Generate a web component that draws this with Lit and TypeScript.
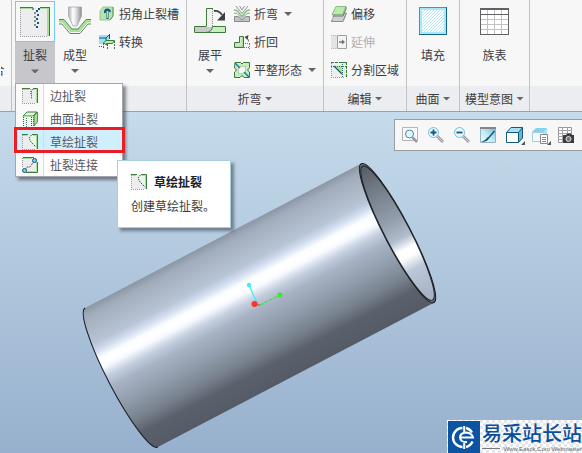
import { LitElement, html, css, svg, nothing, type TemplateResult } from "lit";
import { customElement, property } from "lit/decorators.js";

type Glyph = { w: number; h: number; art: TemplateResult };

const GREEN = "#3c7a3c";
const LIME = "#a4e096";
const BLUE = "#14597d";

const dottedCorner = (n: number) => svg`
  <path d="M.5 1V${n}M0 ${n - 0.5}H${n - 2}" stroke="#9a9aa0" stroke-dasharray="1 1" fill="none"/>`;

const glyphs: Record<string, Glyph> = {
  rip: { w: 30, h: 30, art: svg`
    <g shape-rendering="crispEdges">
      <path d="M0 1H30V29H0z" fill="#ededf0"/>
      <path d="M0 1H13V2H0zM20 1H27V2H20z" fill="${LIME}"/>
      <path d="M27 1H29V29H27z" fill="${LIME}"/>
      <path d="M0 0H13V1H0zM20 0H30V29H29V1H20z" fill="${GREEN}"/>
      ${dottedCorner(30)}
      <path d="M12 1h2v2h-2zM14 5h2v2h-2zM14 9h2v2h-2zM14 13h2v2h-2zM14 17h2v2h-2z" fill="#7d9687"/>
      <path d="M18 1h2v2h-2zM16 3h2v2h-2zM17 7h2v2h-2zM16 11h2v2h-2zM17 15h2v2h-2zM16 19h2v2h-2z" fill="${BLUE}"/>
    </g>` },
  form: { w: 32, h: 28, art: svg`
    <defs><linearGradient id="punch"><stop offset="0" stop-color="#b0b0b5"/><stop offset=".35" stop-color="#fff"/><stop offset=".6" stop-color="#dcdce0"/><stop offset="1" stop-color="#8c8c92"/></linearGradient></defs>
    <path d="M9.500 0V9L14 19H18L22.500 9V0z" fill="url(#punch)" stroke="#a2a2a7" stroke-width=".7"/>
    <path d="M0 14H4L12 23.500H20L28 14H32" fill="none" stroke="${LIME}" stroke-width="3"/>
    <path d="M0 12.500H5L13 22H19L27 12.500H32" fill="none" stroke="#5b8b55" stroke-width="1"/>
    <path d="M0 17H3L11 26.500H21L29 17H32" fill="none" stroke="#77777c" stroke-width="1"/>` },
  flat: { w: 32, h: 26, art: svg`
    <path d="M0 18.500H12V.5H19V18.500H31.500V24.500H.5V18.500" fill="#f1f1f1"/>
    <path d="M1 19H18Q17 24 12 24H1z" fill="#c9c9cd"/>
    <path d="M18 19H31V24H13Q18 23 18 19" fill="#c8edbf"/>
    <path d="M12.500 18V.5H19" fill="none" stroke="${GREEN}"/>
    <path d="M18.500 1V18" stroke="#7c9a7a" stroke-dasharray="1 1"/>
    <path d="M12.500 18.500H.5V24.500H31.500V18.500H18.500Q18 24 12 24.500" fill="none" stroke="${GREEN}"/>
    <path d="M20 3Q25 2 28 7" fill="none" stroke="#3f3f44" stroke-width="1.800"/>
    <path d="M31 4V12.500H23z" fill="#3f3f44"/>` },
  fill: { w: 28, h: 28, art: svg`
    <defs><pattern id="hatch" width="3" height="3" patternUnits="userSpaceOnUse"><rect width="3" height="3" fill="#fff"/><path d="M0 3L3 0" stroke="#a9e3f4" stroke-width=".9"/></pattern></defs>
    <rect x=".5" y=".5" width="27" height="27" fill="#a9e8fb" stroke="#4a94b2"/>
    <path d="M27.500 0V27.500H0" fill="none" stroke="#146287"/>
    <rect x="3" y="3" width="22" height="22" fill="url(#hatch)"/>` },
  table: { w: 29, h: 27, art: svg`
    <g shape-rendering="crispEdges"><rect width="29" height="27" fill="#fff"/>
    <path d="M1 11.500H28M1 16.500H28M1 21.500H28M7.500 1V26M14.500 1V26M21.500 1V26" stroke="#c2c2c4"/>
    <path d="M0 1H29M0 6.500H29" stroke="#626266" fill="none"/><path d="M.5 .5H28.500V26.500H.5z" fill="none" stroke="#626266"/></g>` },
  relief: { w: 16, h: 16, art: svg`
    <path d="M1 5L4 1H14V10L11 14H1z" fill="#b5e5aa" stroke="#8cbc84" stroke-width=".8"/>
    <path d="M14 1V10L11 14" fill="none" stroke="#5b9a55"/>
    <path d="M6 7Q5.500 3.500 8.500 3.500Q11.500 4 10.500 6M8.500 4V13" fill="none" stroke="${BLUE}" stroke-width="2"/>
    <path d="M8.500 5V12" stroke="#d9f6ff" stroke-width=".8"/>` },
  convert: { w: 16, h: 16, art: svg`
    <path d="M0 1H10V6L6 10H0z" fill="#9be0f6"/><path d="M10.500 0V5M10 1L7 4V7M0 4H7" stroke="${BLUE}" fill="none"/>
    <path d="M4.500 9L7 6.500H15.500L13.500 9.500H7.500V11z" fill="#bdeaaf" stroke="${GREEN}"/>
    <path d="M4.500 9V15M8.500 10V15M15.500 7V15" stroke="${GREEN}" stroke-dasharray="2 1"/>
    <path d="M0 12.500H4" stroke="#555" stroke-dasharray="1 1"/>` },
  bend: { w: 16, h: 16, art: svg`
    <path d="M.5 15.500V10.500H4L8 14L12 10.500H15.500V15.500z" fill="#c4c4c8" stroke="#88888d"/>
    <path d="M0 4L3 4.500L8 10.500L13 4.500L16 4" fill="none" stroke="#83c877" stroke-width="1.600"/>
    <path d="M0 7L3 7.500L8 12.500L13 7.500L16 7" fill="none" stroke="#83838a" stroke-width=".8"/>
    <path d="M2 0L8 7.500L14 0M5.500 0L8 4L10.500 0" fill="none" stroke="#7c7c82" stroke-width=".8"/>` },
  unbend: { w: 16, h: 14, art: svg`
    <path d="M.5 7.500H5.500V1.500H9.500V12.500H.5z" fill="#d6dcd6" stroke="${GREEN}"/>
    <path d="M1 11.500H8.500V2" fill="none" stroke="${LIME}"/>
    <path d="M11 8.500H16M15.500 9V14M10 12.500H16" fill="none" stroke="#777" stroke-dasharray="1 1"/>
    <path d="M12 2.500Q14.500 3 14.500 7" fill="none" stroke="#444" stroke-dasharray="2 1"/><path d="M14.500 0L10.500 2L13.500 5z" fill="#444"/>` },
  pattern: { w: 16, h: 16, art: svg`
    <path d="M1 .5H6.500Q8 3.500 9.500 .5H15.500V6Q12 8 15.500 10V15.500H10Q8 12 6 15.500H.5V10Q4 8 .5 6z" fill="#c4efba" stroke="${GREEN}"/>
    <path d="M4.500 4.500H11.500V11.500H4.500z" fill="#f6faf5" stroke="#999" stroke-dasharray="1 1"/>
    <path d="M1 1L6 6M10 10L15 15" stroke="#1684ad" stroke-width="1.500"/>` },
  offset: { w: 16, h: 16, art: svg`
    <path d="M4 7H15.500L12 15.500H.5z" fill="#d0d0d4" stroke="#97979c" stroke-width=".8"/>
    <path d="M.5 14L1 15.500H12L15.500 7" fill="none" stroke="#8b8b90"/>
    <path d="M5 .5H15L11.500 8.500H1z" fill="#b8eaae" stroke="#7cab76" stroke-width=".8"/>
    <path d="M15 1V3L12 10H1.500" fill="none" stroke="#5c8058"/>` },
  extend: { w: 16, h: 14, art: svg`
    <path d="M0 0H6V14H0z" fill="#e3e3e5"/><path d="M0 .5H6M0 13.500H6" stroke="#bcbcbf" stroke-dasharray="1 1"/>
    <path d="M6.500 .5H15.500V13.500H6.500z" fill="#f3f3f4" stroke="#a0a0a3"/>
    <path d="M8 7H12" stroke="#747478" stroke-width="1.500"/><path d="M11 4.500L14 7L11 9.500z" fill="#747478"/>` },
  divide: { w: 16, h: 16, art: svg`
    <path d="M0 0H16V15H0z" fill="#eeeeef"/><path d="M4 4H11V11z" fill="#a4e398"/><path d="M11 1H15V14H11z" fill="#dcf4d7"/>
    <path d="M0 .5H16M15.500 0V15" stroke="${GREEN}" stroke-dasharray="3 1"/>
    <path d="M3 4L11 12" stroke="${BLUE}" stroke-width="1.200"/>
    <path d="M0 4.500H16M11.500 0V15" stroke="#3c6c78" stroke-dasharray="1 1"/>
    ${dottedCorner(16)}` },
  edgeRip: { w: 16, h: 16, art: svg`
    <path d="M0 1H15V15H0z" fill="#ededf0"/><path d="M0 1.500H7M11 1.500H14.500V15" fill="none" stroke="${LIME}"/>
    <path d="M0 .5H8M11 .5H15.500V15" fill="none" stroke="${GREEN}"/>
    <path d="M10.500 1L9.500 3V11" fill="none" stroke="${BLUE}" stroke-dasharray="1 1"/>
    <path d="M8.500 1V7" stroke="#83a083" stroke-dasharray="1 1"/>${dottedCorner(16)}` },
  surfaceRip: { w: 16, h: 16, art: svg`
    <path d="M1 5L5 1H15L11 5z" fill="#e5f7e1" stroke="${GREEN}"/>
    <path d="M12 5L15.500 1V11L12 15z" fill="${LIME}" stroke="${GREEN}" stroke-width=".8"/>
    <path d="M2 6H11V16H2z" fill="#f4f4f5"/><path d="M.5 5.500H12" stroke="${LIME}"/>
    <path d="M1.500 6V16M9.500 6V16" stroke="${BLUE}" stroke-dasharray="1 1"/>
    <path d="M4.500 7V16M11.500 6V16" stroke="#3d7468" stroke-dasharray="1 1"/>` },
  sketchRip: { w: 16, h: 16, art: svg`
    <path d="M0 1H15V15H0z" fill="#ededf0"/><path d="M9 1H14V12L8 7L7 4z" fill="#e9f7e6"/>
    <path d="M0 1.500H5M11 1.500H14.500V15" fill="none" stroke="${LIME}"/>
    <path d="M0 .5H6M10 .5H15.500V15" fill="none" stroke="${GREEN}"/>
    <path d="M9.500 1L7 4L9 8L14 13" fill="none" stroke="${BLUE}" stroke-dasharray="1.500 1"/>${dottedCorner(16)}` },
  ripJoin: { w: 16, h: 16, art: svg`
    <path d="M1 1H15V15H1z" fill="#ededf0"/><path d="M1 .5H12M15.500 5V15.500H4" fill="none" stroke="${GREEN}"/>
    <path d="M1 1.500H10M14.500 5V14.500H5" fill="none" stroke="${LIME}"/><path d="M.5 1V11" stroke="#888" stroke-dasharray="1 1"/>
    <path d="M3 13L5 10H8L12 4" fill="none" stroke="#555" stroke-dasharray="2 1"/>
    <circle cx="12.500" cy="3.500" r="2" fill="#74d0ee" stroke="${BLUE}"/><circle cx="2.500" cy="13.500" r="2" fill="#74d0ee" stroke="${BLUE}"/>` },
  zoomFit: { w: 16, h: 16, art: svg`
    <path d="M.5 .5H15.500V13.500H.5z" fill="#fafafa" stroke="#b4b4b7"/>
    <path d="M10.500 10.500L15 15" stroke="#9a9a9f" stroke-width="2.500"/><circle cx="7.500" cy="7" r="4" fill="#e4f6fd" stroke="#3f8bab"/>` },
  zoomIn: { w: 16, h: 16, art: svg`
    <path d="M9 9L15 15" stroke="#98989d" stroke-width="2.800"/><path d="M9 9L15 15" stroke="#d6d6d9"/>
    <circle cx="5.500" cy="5.500" r="5" fill="#e8f8fe" stroke="#7dbcd4"/><path d="M2.500 5.500H8.500M5.500 2.500V8.500" stroke="${BLUE}" stroke-width="1.800"/>` },
  zoomOut: { w: 16, h: 16, art: svg`
    <path d="M9 9L15 15" stroke="#98989d" stroke-width="2.800"/><path d="M9 9L15 15" stroke="#d6d6d9"/>
    <circle cx="5.500" cy="5.500" r="5" fill="#e8f8fe" stroke="#7dbcd4"/><path d="M2.500 5.500H8.500" stroke="${BLUE}" stroke-width="1.800"/>` },
  repaint: { w: 16, h: 16, art: svg`
    <defs><linearGradient id="paint" x1="0" y1="1" x2="1" y2="0"><stop offset="0" stop-color="#f7fcfe"/><stop offset=".5" stop-color="#c3e8f4"/><stop offset="1" stop-color="#62bcd9"/></linearGradient></defs>
    <path d="M.5 .5H15.500V15.500H.5z" fill="url(#paint)" stroke="#93b4c2"/><path d="M0 1H16" stroke="#85858a" stroke-width="2"/>
    <path d="M1 15Q6 13 8 10L9 11Q8 15 1 15" fill="#0d5578"/><path d="M8 11.500L14.500 4" stroke="#174e68" stroke-width="1.300"/>` },
  shaded: { w: 19, h: 18, art: svg`
    <path d="M1 5.500L5 .5H16.500L12.500 5.500z" fill="#a5e0f4"/><path d="M12.500 5.500L16.500 .5V11L12.500 15.500z" fill="#64b6d2"/><path d="M.5 5.500H12.500V15.500H.5z" fill="#fff"/>
    <path d="M.5 5.500H12.500V15.500H.5zL5 .5H16.500V11L12.500 15.500M12.500 5.500L16.500 .5" fill="none" stroke="${BLUE}" stroke-linejoin="round"/>
    <path d="M19 14V18H15z" fill="#555"/>` },
  views: { w: 19, h: 18, art: svg`
    <path d="M0 5L4 1H15L12 5z" fill="#7fd5f1"/><path d="M12 5L15 1V11H12z" fill="#a8e2f5"/><path d="M.5 5.500H11.500V14.500H.5z" fill="#f0fafd" stroke="#a5cddb"/>
    <path d="M8.500 7.500H15.500V16.500H8.500z" fill="#fff" stroke="#88888c"/><path d="M10 10.500H14M10 12.500H14M10 14.500H14" stroke="#88888c"/>
    <path d="M19 14V18H15z" fill="#555"/>` },
  capture: { w: 16, h: 16, art: svg`
    <path d="M.5 .5H13.500V15.500H.5z" fill="#fff" stroke="#97979b"/><path d="M0 3.500H14M0 6.500H14M0 9.500H8M0 12.500H8M4.500 0V16M9.500 0V8" stroke="#a4a4a8"/>
    <path d="M5 8H8L9 6.500H13L14 8H16V16H5z" fill="#3c3c40"/><circle cx="10.500" cy="12" r="2.500" fill="#777" stroke="#ddd"/>` },
};

const glyph = (name: string) => {
  const g = glyphs[name];
  return html`<svg class="glyph" width=${g.w} height=${g.h} viewBox="0 0 ${g.w} ${g.h}" aria-hidden="true">${g.art}</svg>`;
};

const base = css`
  :host { font-family: "Noto Sans CJK SC", sans-serif; font-size: 12px; line-height: 18px; color: #3c3c40; }
  * { box-sizing: border-box; }
  button { font: inherit; color: inherit; background: none; border: 0; padding: 0; margin: 0; white-space: nowrap; }
  .glyph { display: block; flex: none; overflow: visible; }
  .arrow { flex: none; width: 8px; height: 4px; background: #66666a; clip-path: polygon(0 0, 100% 0, 50% 100%); }
`;

type Tool = { icon: string; label: string; arrow?: boolean; disabled?: boolean };

@customElement("ribbon-group")
class RibbonGroup extends LitElement {
  @property() caption = "";
  @property({ attribute: false }) tools: Tool[] = [];

  static styles = [base, css`
    :host { display: flex; flex: none; flex-direction: column; border-right: 1px solid #c2c2c5; }
    .body { display: flex; justify-content: center; height: 86px; padding: 0 7px 0 3px; }
    .tools { display: grid; grid-auto-rows: 28px; align-content: start; margin-left: 4px; }
    .tool { display: flex; align-items: center; gap: 4px; }
    .tool .arrow { margin-left: 2px; }
    .tool:disabled { color: #b0b0b3; }
    .caption { display: flex; align-items: center; justify-content: center; gap: 3px; height: 25px; padding: 0 5px; background: #ecedf0; }
    :host([single]) .body { padding: 0 6px; }
  `];

  render() {
    return html`
      <div class="body">
        <slot></slot>
        ${this.tools.length ? html`<div class="tools">
          ${this.tools.map((t) => html`<button class="tool" ?disabled=${t.disabled}>
            ${glyph(t.icon)}<span>${t.label}</span>${t.arrow ? html`<i class="arrow"></i>` : nothing}
          </button>`)}
        </div>` : nothing}
      </div>
      ${this.caption
        ? html`<button class="caption">${this.caption}<i class="arrow"></i></button>`
        : html`<div class="caption"></div>`}
    `;
  }
}

@customElement("rip-menu")
class RipMenu extends LitElement {
  static styles = [base, css`
    :host { display: block; width: 108px; border: 1px solid #a5a5aa; background: #fff; box-shadow: 3px 3px 3px rgba(40, 50, 60, 0.55); color: #58585c; }
    .entry { position: relative; }
    .item { display: flex; align-items: center; width: 100%; height: 23px; text-align: left; }
    .gutter { display: flex; align-items: center; width: 28px; height: 100%; padding-left: 6px; border-right: 1px solid #dcdcde; background: #fafafa; }
    .text { padding-left: 6px; }
    .current .item, .current .gutter { background: #d0effd; border-color: #c3e2ef; }
    .current::after { content: ""; position: absolute; inset: -3px -3px 0 -2px; border: 3px solid #ec1c24; pointer-events: none; }
    .tip { position: absolute; z-index: 1; left: 101px; top: 30px; width: 114px; padding: 12px 13px 12px; border: 1px solid #a9cfdf; background: #fff; box-shadow: 3px 3px 3px rgba(40, 50, 60, 0.5); color: #3c3c40; }
    .head { display: flex; align-items: center; gap: 7px; margin-bottom: 6px; color: #202024; font-weight: 700; }
    .tip p { margin: 0; white-space: nowrap; }
  `];

  render() {
    const items: [string, string][] = [
      ["edgeRip", "边扯裂"], ["surfaceRip", "曲面扯裂"], ["sketchRip", "草绘扯裂"], ["ripJoin", "扯裂连接"],
    ];
    return html`${items.map(([icon, label], i) => html`
      <div class="entry ${i === 2 ? "current" : ""}">
        <button class="item" role="menuitem"><span class="gutter">${glyph(icon)}</span><span class="text">${label}</span></button>
        ${i === 2 ? html`<div class="tip" role="tooltip">
          <div class="head">${glyph(icon)}<span>${label}</span></div>
          <p>创建草绘扯裂。</p>
        </div>` : nothing}
      </div>`)}`;
  }
}

@customElement("model-view")
class ModelView extends LitElement {
  static styles = [base, css`
    :host { position: relative; display: flex; flex-direction: column; flex: 1; min-height: 340px; overflow: hidden; background: linear-gradient(#c6dbeb, #97b0cd); }
    .scene { position: absolute; inset: 0; width: 100%; height: 100%; }
    .bar { position: relative; display: flex; align-items: center; align-self: flex-end; gap: 10px; height: 32px; margin-top: 7px; padding: 0 8px 0 7px; border: 1px solid #9a9da2; border-right: 0; background: #f7f7f8; }
    .view { width: 16px; height: 16px; }
    .mark { position: relative; display: flex; align-items: center; align-self: flex-end; gap: 2px; margin-top: auto; padding: 0 0 0 1px; height: 33px; background: repeating-conic-gradient(#e3e6ea 0 25%, #fff 0 50%) 0 0 / 6px 6px; }
    .words { color: #0c4e9e; text-decoration: none; }
    .name { font-size: 20px; line-height: 24px; font-weight: 500; }
    .site { display: flex; align-items: center; gap: 3px; font: 6px/8px "Liberation Sans", sans-serif; color: #66686c; white-space: nowrap; }
    .site::before { content: ""; flex: 1; height: 1px; background: #77797d; }
  `];

  render() {
    const views: [string, string][] = [
      ["zoomFit", "重新调整"], ["zoomIn", "放大"], ["zoomOut", "缩小"], ["repaint", "重画"],
      ["shaded", "显示样式"], ["views", "已保存方向"], ["capture", "视图管理器"],
    ];
    return html`
      <svg class="scene" viewBox="0 112 582 341" aria-hidden="true">
        <defs>
          <linearGradient id="outer" x1="0" y1="0" x2="0" y2="1">
            <stop offset="0" stop-color="#8c96a4"/><stop offset=".05" stop-color="#a0acbb"/>
            <stop offset=".15" stop-color="#aebaca"/><stop offset=".23" stop-color="#b8c5d7"/>
            <stop offset=".28" stop-color="#d3dfef"/><stop offset=".325" stop-color="#fbfdff"/>
            <stop offset=".36" stop-color="#fff"/><stop offset=".39" stop-color="#f6f9ff"/>
            <stop offset=".45" stop-color="#c3cedf"/><stop offset=".52" stop-color="#a7b3c4"/>
            <stop offset=".65" stop-color="#909cab"/><stop offset=".77" stop-color="#79838f"/>
            <stop offset=".87" stop-color="#5b616c"/><stop offset="1" stop-color="#555b66"/>
          </linearGradient>
          <linearGradient id="inner" x1="0" y1="0" x2="0" y2="1">
            <stop offset="0" stop-color="#565c66"/><stop offset=".15" stop-color="#6f7782"/>
            <stop offset=".4" stop-color="#929dab"/><stop offset=".54" stop-color="#b1bccc"/>
            <stop offset=".62" stop-color="#fff"/><stop offset=".67" stop-color="#fff"/>
            <stop offset=".76" stop-color="#bcc8d9"/><stop offset="1" stop-color="#a3afbf"/>
          </linearGradient>
        </defs>
        <g transform="translate(121.500 377.500) rotate(-27.600)">
          <path d="M0-78.500H311.500A13.300 78.500 0 0 1 311.500 78.500H0A13.300 78.500 0 0 1 0-78.500z" fill="url(#outer)"/>
          <path d="M0 78.500A13.300 78.500 0 0 1 0-78.500" fill="none" stroke="#1d2126" stroke-width="1.100"/>
          <ellipse cx="311.500" cy="0" rx="13" ry="78.300" fill="#69727e" stroke="#1d2126" stroke-width="1.100"/>
          <ellipse cx="311.500" cy="0" rx="12.500" ry="75.500" fill="url(#inner)" stroke="#1d2126"/>
        </g>
        <path d="M249 285L258 305" stroke="#3deff5" stroke-width="1.300"/>
        <path d="M260 305L280 295" stroke="#35e935" stroke-width="1.300" stroke-dasharray="4 1"/>
        <path d="M255 305H260" stroke="#e83030"/>
        <circle cx="249" cy="285" r="2.200" fill="#3deff5"/><circle cx="280" cy="295" r="2.500" fill="#35e935"/>
        <circle cx="254.500" cy="304" r="3" fill="#fb3030"/>
      </svg>
      <div class="bar" role="toolbar">
        ${views.map(([icon, label]) => html`<button class="view" aria-label=${label}>${glyph(icon)}</button>`)}
      </div>
      <div class="mark">
        <svg class="glyph" width="32" height="32" viewBox="0 0 32 32" aria-hidden="true">
          <rect width="32" height="32" fill="#0c53a2"/>
          <path d="M14.500 7A9.500 9.500 0 0 0 14.500 26M18 7A9.500 9.500 0 0 1 24 11.500M18 26A9.500 9.500 0 0 0 24.500 20.500" fill="none" stroke="#fff" stroke-width="2.400"/>
          <path d="M16.200 5V11M16.200 22V28M12 16.500H25Q24 12 18 11.500Q12 12 12 16.500Q12.500 21.500 19 21" fill="none" stroke="#fff" stroke-width="2"/>
        </svg>
        <a class="words" href="#">
          <div class="name">易采站长站</div>
          <div class="site">Www.Easck.Com Webmaster</div>
        </a>
      </div>
    `;
  }
}

@customElement("app-root")
class AppRoot extends LitElement {
  static styles = [base, css`
    :host { display: flex; flex-direction: column; min-height: 100vh; }
    .ribbon { position: relative; z-index: 1; display: flex; height: 112px; background: #f7f7f8; border-bottom: 1px solid #9fa0a3; }
    .rest { flex: 1; background: linear-gradient(#f7f7f8 86px, #ecedf0 86px); }
    .edge { width: 12px; }
    .clipped { display: flex; justify-content: flex-end; width: 4px; margin: 61px 2px 0 0; height: 18px; overflow: hidden; flex: none; }
    .big, .split { display: flex; flex-direction: column; align-items: center; width: 40px; height: 84px; position: relative; }
    .art { display: flex; align-items: center; justify-content: center; width: 100%; height: 42px; }
    .label { display: flex; flex-direction: column; align-items: center; width: 100%; height: 42px; gap: 5px; padding-top: 4px; }
    .split .art { border: 1px solid #6fcdf5; margin-top: 1px; }
    .split .label { background: #c6c6cb; }
    .menu { position: absolute; left: 0; top: 83px; }
  `];

  private big(icon: string, label: string, arrow = false) {
    return html`<button class="big"><span class="art">${glyph(icon)}</span>
      <span class="label">${label}${arrow ? html`<i class="arrow"></i>` : nothing}</span></button>`;
  }

  render() {
    const reliefs: Tool[] = [{ icon: "relief", label: "拐角止裂槽" }, { icon: "convert", label: "转换" }];
    const bends: Tool[] = [
      { icon: "bend", label: "折弯", arrow: true }, { icon: "unbend", label: "折回" },
      { icon: "pattern", label: "平整形态", arrow: true },
    ];
    const edits: Tool[] = [
      { icon: "offset", label: "偏移" }, { icon: "extend", label: "延伸", disabled: true },
      { icon: "divide", label: "分割区域" },
    ];
    return html`
      <header class="ribbon">
        <ribbon-group class="edge"><span class="clipped">合</span></ribbon-group>
        <ribbon-group .tools=${reliefs}>
          <div class="split">
            <button class="art" aria-label="扯裂">${glyph("rip")}</button>
            <button class="label" aria-haspopup="menu" aria-expanded="true">扯裂<i class="arrow"></i></button>
            <rip-menu class="menu" role="menu"></rip-menu>
          </div>
          ${this.big("form", "成型", true)}
        </ribbon-group>
        <ribbon-group caption="折弯" .tools=${bends}>${this.big("flat", "展平", true)}</ribbon-group>
        <ribbon-group caption="编辑" .tools=${edits}></ribbon-group>
        <ribbon-group single caption="曲面">${this.big("fill", "填充")}</ribbon-group>
        <ribbon-group single caption="模型意图">${this.big("table", "族表")}</ribbon-group>
        <div class="rest"></div>
      </header>
      <model-view></model-view>
    `;
  }
}
